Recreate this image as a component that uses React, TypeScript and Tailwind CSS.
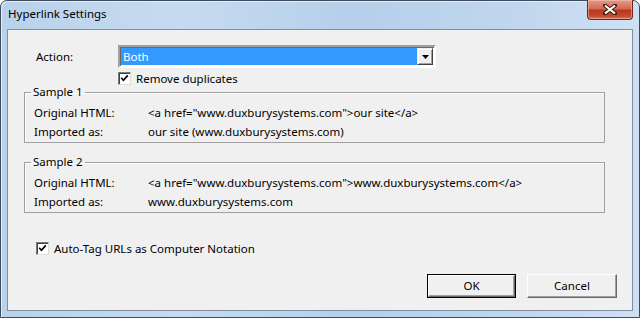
function Check() {
  return (
    <span className="flex h-[13px] w-[13px] shrink-0 items-center justify-center border border-t-[#7a7a7a] border-l-[#7a7a7a] border-b-[#dcdcdc] border-r-[#dcdcdc] bg-white shadow-[inset_1px_1px_0_#404040]">
      <svg width="9" height="9" viewBox="0 0 9 9">
        <path d="M1.2 3.8 L3.4 6.2 L7.8 1.4" stroke="#000" strokeWidth="1.7" fill="none" />
      </svg>
    </span>
  );
}

function Row({ label, value }: { label: string; value: string }) {
  return (
    <div className="flex h-[19px] items-center pl-[9px] whitespace-nowrap">
      <span className="w-[114px]">{label}</span>
      <span>{value}</span>
    </div>
  );
}

function Group({ title, rows }: { title: string; rows: [string, string][] }) {
  return (
    <fieldset className="ml-[16px] mr-[27px] border border-[#a0a0a0] pt-[3px] pb-[1px] shadow-[inset_1px_1px_0_#fff]">
      <legend className="ml-[6px] px-[2px] leading-[16px]">{title}</legend>
      {rows.map(([l, v]) => (
        <Row key={l} label={l} value={v} />
      ))}
    </fieldset>
  );
}

export default function App() {
  return (
    <div className="relative h-[318px] w-[640px] overflow-hidden bg-white font-['Segoe_UI','Noto_Sans',sans-serif] text-[11.5px] text-black">
      <div className="flex h-full w-full flex-col rounded-t-[7px] border border-[#3d4b5c] bg-[linear-gradient(to_right,#b9d1ea,#c6dbf1_28%,#b6cfea_55%,#c0d6ee_80%,#cfe0f3)] shadow-[inset_1px_1px_0_#e4eef9]">
        {/* title */}
        <div className="flex h-[28px] items-center pb-[2px] pl-[7px]">Hyperlink Settings</div>

        {/* client */}
        <div className="mx-[6px] mb-[6px] flex flex-1 flex-col border border-[#7f8fa3] bg-[#f0f0f0]">
          <div className="mt-[15px] flex items-center">
            <span className="ml-[28px] w-[82px]">Action:</span>
            <div className="flex h-[23px] w-[318px] border-2 border-t-[#a0a0a0] border-l-[#a0a0a0] border-b-white border-r-white bg-white p-[1px] shadow-[inset_1px_1px_0_#696969]">
              <span className="flex flex-1 items-center bg-[#3399ff] pl-[2px] text-white">Both</span>
              <span className="flex w-[16px] items-center justify-center border border-t-[#f0f0f0] border-l-[#f0f0f0] border-b-[#404040] border-r-[#404040] bg-[#f0f0f0] shadow-[inset_1px_1px_0_#fff,inset_-1px_-1px_0_#a0a0a0]">
                <svg width="7" height="4" viewBox="0 0 7 4">
                  <path d="M0 0 H7 L3.5 4 Z" fill="#000" />
                </svg>
              </span>
            </div>
          </div>

          <div className="mt-[4px] ml-[110px] flex h-[13px] items-center gap-[5px]">
            <Check />
            <span>Remove duplicates</span>
          </div>

          <div className="mt-[-1px]">
            <Group
              title="Sample 1"
              rows={[
                ["Original HTML:", '<a href="www.duxburysystems.com">our site</a>'],
                ["Imported as:", "our site (www.duxburysystems.com)"],
              ]}
            />
          </div>
          <div className="mt-[11px]">
            <Group
              title="Sample 2"
              rows={[
                ["Original HTML:", '<a href="www.duxburysystems.com">www.duxburysystems.com</a>'],
                ["Imported as:", "www.duxburysystems.com"],
              ]}
            />
          </div>

          <div className="mt-[29px] ml-[28px] flex h-[13px] items-center gap-[5px]">
            <Check />
            <span>Auto-Tag URLs as Computer Notation</span>
          </div>

          <div className="mt-[19px] flex justify-end gap-[11px] pr-[15px]">
            <button className="h-[24px] w-[89px] border border-black bg-[#f0f0f0] p-0">
              <span className="flex h-full w-full items-center justify-center border border-t-white border-l-white border-b-[#696969] border-r-[#696969] shadow-[inset_-1px_-1px_0_#a0a0a0]">
                OK
              </span>
            </button>
            <button className="flex h-[24px] w-[90px] items-center justify-center border border-t-white border-l-white border-b-[#696969] border-r-[#696969] bg-[#f0f0f0] shadow-[inset_-1px_-1px_0_#a0a0a0]">
              Cancel
            </button>
          </div>
        </div>
      </div>

      {/* close button */}
      <div className="absolute top-0 right-[7px] flex h-[20px] w-[46px] items-center justify-center rounded-b-[4px] border border-t-0 border-[#6b2a1f] bg-[linear-gradient(to_bottom,#e3998a,#d46a52_45%,#b93621_55%,#c44b30_85%,#d8785a)] shadow-[inset_0_0_0_1px_rgba(255,210,200,0.45)]">
        <svg width="14" height="11" viewBox="0 0 14 11">
          <path d="M2 1.5 L12 9.5 M12 1.5 L2 9.5" stroke="#3b1a12" strokeWidth="4" strokeLinecap="square" />
          <path d="M2 1.5 L12 9.5 M12 1.5 L2 9.5" stroke="#fff" strokeWidth="2.2" />
        </svg>
      </div>
    </div>
  );
}
